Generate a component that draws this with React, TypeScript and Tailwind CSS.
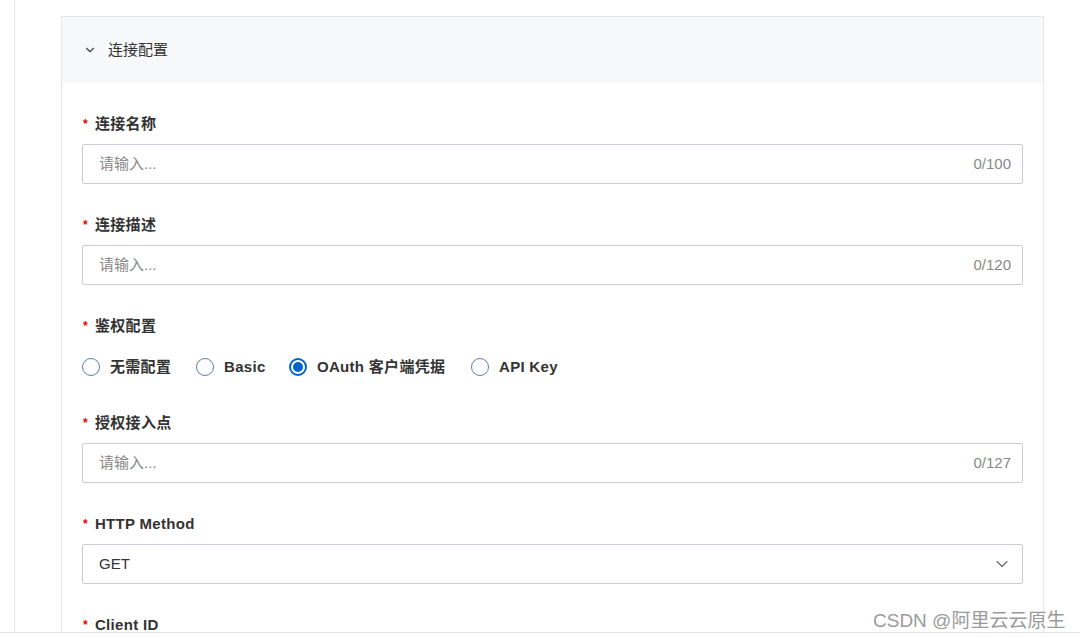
import { ChevronDown } from "lucide-react"

const font = { fontFamily: '"Liberation Sans", "Noto Sans CJK SC", sans-serif' }

const Label = ({ text, className = "" }: { text: string; className?: string }) => (
  <div className={`flex h-5 items-center text-[15px] font-semibold tracking-[0.3px] text-[#333] ${className}`}>
    <span className="ml-[1px] mr-[7px] text-[12px] text-[#e00]">*</span>
    {text}
  </div>
)

const TextInput = ({ max }: { max: number }) => (
  <div className="mb-[31px] flex h-10 items-center justify-between rounded-[2px] border border-[#c8ccd2] pl-4 pr-[11px] text-[15px]">
    <span className="text-[#888]">请输入...</span>
    <span className="text-[#888]">0/{max}</span>
  </div>
)

const Radio = ({ label, checked }: { label: string; checked?: boolean }) => (
  <div className="flex items-center">
    {checked ? (
      <span className="flex h-[18px] w-[18px] items-center justify-center rounded-full border-2 border-[#0064c8]">
        <span className="h-[10px] w-[10px] rounded-full bg-[#0064c8]" />
      </span>
    ) : (
      <span className="h-[18px] w-[18px] rounded-full border border-[#5f7fa6]" />
    )}
    <span className="ml-[10px] text-[15px] font-semibold tracking-[0.3px] text-[#333]">{label}</span>
  </div>
)

export default function App() {
  return (
    <div className="relative h-[638px] w-[1080px] overflow-hidden bg-white" style={font}>
      <div className="flex h-[633px] border-b border-[#e3e3e3]">
        <div className="w-[14px]" />
        <div className="flex-1 border-l border-[#e3e3e3] pl-[46px] pt-4">
          <div className="h-full w-[983px] border border-b-0 border-[#e5e6e8]">
            <div className="flex h-[66px] items-center bg-[#f7f8fa] pl-[21px]">
              <ChevronDown size={14} strokeWidth={2} className="text-[#444]" />
              <span className="ml-[11px] text-[15px] text-[#333]">连接配置</span>
            </div>
            <div className="px-5 pt-[31px]">
              <Label text="连接名称" className="mb-[10px]" />
              <TextInput max={100} />

              <Label text="连接描述" className="mb-[10px]" />
              <TextInput max={120} />

              <Label text="鉴权配置" className="mb-[21px]" />
              <div className="mb-[36px] flex h-5 items-center">
                <div className="w-[114px]">
                  <Radio label="无需配置" />
                </div>
                <div className="w-[93px]">
                  <Radio label="Basic" />
                </div>
                <div className="w-[182px]">
                  <Radio label="OAuth 客户端凭据" checked />
                </div>
                <Radio label="API Key" />
              </div>

              <Label text="授权接入点" className="mb-[10px]" />
              <TextInput max={127} />

              <Label text="HTTP Method" className="mb-[10px]" />
              <div className="mb-[31px] flex h-10 items-center justify-between rounded-[2px] border border-[#c8ccd2] pl-4 pr-[10px] text-[15px] text-[#333]">
                <span>GET</span>
                <ChevronDown size={20} strokeWidth={1.3} className="text-[#666]" />
              </div>

              <Label text="Client ID" />
            </div>
          </div>
        </div>
      </div>
      <div className="absolute left-[873px] top-[607px] text-[19px] text-[#9a9a9a] [text-shadow:0_0_2px_#fff]">
        CSDN @阿里云云原生
      </div>
    </div>
  )
}
